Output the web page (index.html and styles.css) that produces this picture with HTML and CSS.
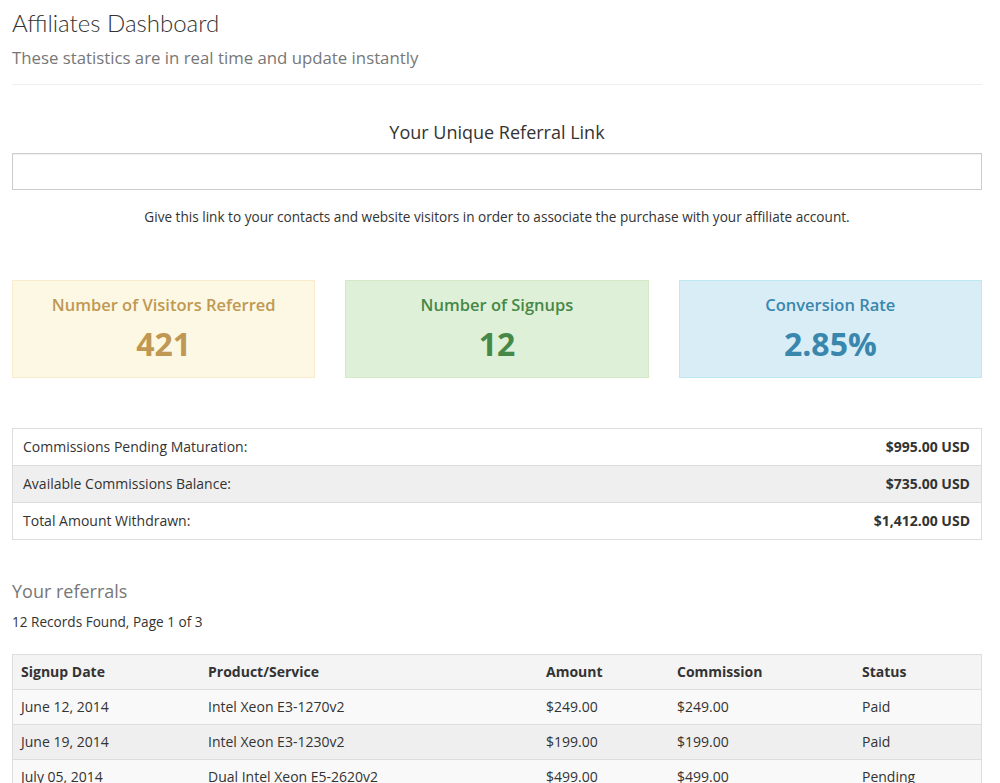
FILE: index.html
```html
<!DOCTYPE html>
<html>
<head>
<meta charset="utf-8">
<title>Affiliates Dashboard</title>
<link rel="stylesheet" href="styles.css">
</head>
<body>
<div class="page">
  <header class="page-header">
    <h1 class="title">Affiliates Dashboard</h1>
    <p class="subtitle">These statistics are in real time and update instantly</p>
  </header>

  <section class="referral">
    <h2 class="referral-title">Your Unique Referral Link</h2>
    <input class="referral-input" type="text" value="">
    <p class="referral-help">Give this link to your contacts and website visitors in order to associate the purchase with your affiliate account.</p>
  </section>

  <section class="stats">
    <div class="stat stat-warning">
      <div class="stat-label">Number of Visitors Referred</div>
      <div class="stat-value">421</div>
    </div>
    <div class="stat stat-success">
      <div class="stat-label">Number of Signups</div>
      <div class="stat-value">12</div>
    </div>
    <div class="stat stat-info">
      <div class="stat-label">Conversion Rate</div>
      <div class="stat-value">2.85%</div>
    </div>
  </section>

  <table class="balances">
    <tr><td>Commissions Pending Maturation:</td><td class="amt">$995.00 USD</td></tr>
    <tr class="alt"><td>Available Commissions Balance:</td><td class="amt">$735.00 USD</td></tr>
    <tr><td>Total Amount Withdrawn:</td><td class="amt">$1,412.00 USD</td></tr>
  </table>

  <h3 class="section-title">Your referrals</h3>
  <p class="records">12 Records Found, Page 1 of 3</p>

  <table class="referrals">
    <thead>
      <tr>
        <th class="c1">Signup Date</th>
        <th class="c2">Product/Service</th>
        <th class="c3">Amount</th>
        <th class="c4">Commission</th>
        <th class="c5">Status</th>
      </tr>
    </thead>
    <tbody>
      <tr><td>June 12, 2014</td><td>Intel Xeon E3-1270v2</td><td>$249.00</td><td>$249.00</td><td>Paid</td></tr>
      <tr class="alt"><td>June 19, 2014</td><td>Intel Xeon E3-1230v2</td><td>$199.00</td><td>$199.00</td><td>Paid</td></tr>
      <tr><td>July 05, 2014</td><td>Dual Intel Xeon E5-2620v2</td><td>$499.00</td><td>$499.00</td><td>Pending</td></tr>
    </tbody>
  </table>
</div>
</body>
</html>
```

FILE: styles.css
```css
html, body {
  margin: 0;
  padding: 0;
  background: #fff;
}
body {
  font-family: "Open Sans", "Liberation Sans", sans-serif;
  font-size: 14px;
  line-height: 20px;
  color: #333;
  overflow: hidden;
}
.page {
  width: 970px;
  margin-left: 12px;
}
.page-header {
  padding-top: 9px;
  padding-bottom: 15px;
  border-bottom: 1px solid #eee;
}
.title {
  margin: 0;
  font-family: Lato, "Open Sans", sans-serif;
  font-weight: 300;
  font-size: 24px;
  line-height: 28px;
  color: #333;
}
.subtitle {
  margin: 9px 0 0;
  font-size: 16.8px;
  line-height: 23px;
  color: #777;
}
.referral {
  text-align: center;
  padding-top: 35px;
}
.referral-title {
  margin: 0;
  font-weight: 400;
  font-size: 18px;
  line-height: 24px;
  color: #333;
}
.referral-input {
  display: block;
  box-sizing: border-box;
  width: 100%;
  height: 37px;
  margin: 9px 0 0;
  border: 1px solid #ccc;
  border-radius: 0;
  box-shadow: inset 0 1px 1px rgba(0,0,0,0.06);
  font-family: inherit;
  font-size: 14px;
  padding: 6px 10px;
}
.referral-help {
  margin: 17px 0 0;
  font-size: 13.6px;
  line-height: 20px;
  color: #333;
}
.stats {
  display: grid;
  grid-template-columns: repeat(3, 1fr);
  column-gap: 30px;
  margin-top: 53px;
}
.stat {
  box-sizing: border-box;
  height: 98px;
  border: 1px solid;
  text-align: center;
  padding-top: 12px;
}
.stat-label {
  font-weight: 600;
  font-size: 16.5px;
  line-height: 24px;
}
.stat-value {
  font-weight: 700;
  font-size: 32px;
  line-height: 40px;
  margin-top: 7px;
}
.stat-warning { background: #fcf8e3; border-color: #faebcc; color: #c09853; }
.stat-success { background: #dff0d8; border-color: #d6e9c6; color: #468847; }
.stat-info    { background: #d9edf7; border-color: #bce8f1; color: #3a87ad; }

.balances {
  width: 100%;
  border-collapse: collapse;
  margin-top: 50px;
  border: 1px solid #ddd;
}
.balances td {
  padding: 8px 10px;
  border-top: 1px solid #ddd;
  font-size: 14px;
  line-height: 20px;
}
.balances tr.alt td { background: #efefef; }
.balances td.amt {
  text-align: right;
  font-weight: 700;
  padding-right: 11px;
}
.section-title {
  margin: 39px 0 0;
  font-weight: 400;
  font-size: 18px;
  line-height: 24px;
  color: #777;
}
.records {
  margin: 9px 0 0;
  font-size: 13.6px;
  line-height: 20px;
}
.referrals {
  width: 100%;
  border-collapse: collapse;
  margin-top: 22px;
  border: 1px solid #ddd;
  table-layout: fixed;
}
.referrals th,
.referrals td {
  text-align: left;
  padding: 7px 8px;
  border-top: 1px solid #ddd;
  font-size: 14px;
  line-height: 20px;
}
.referrals th {
  font-weight: 700;
  background: #f4f4f4;
}
.referrals tbody td { background: #f9f9f9; }
.referrals tbody tr.alt td { background: #efefef; }
.referrals .c1 { width: 171px; }
.referrals .c2 { width: 322px; }
.referrals .c3 { width: 115px; }
.referrals .c4 { width: 169px; }
```
